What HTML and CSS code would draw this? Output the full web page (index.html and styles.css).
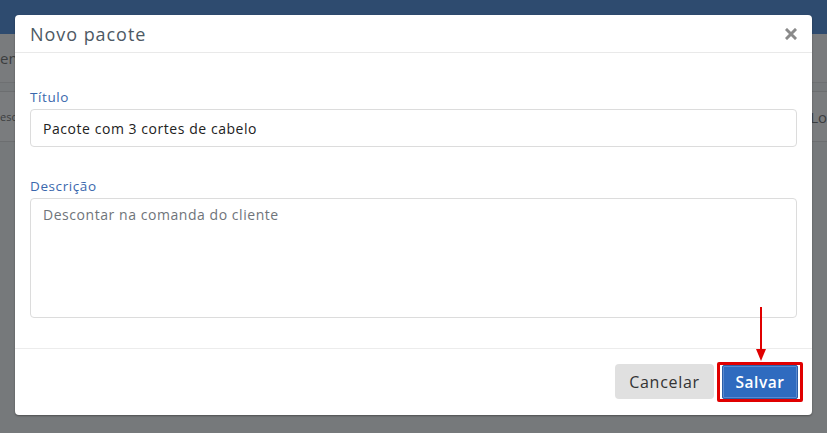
FILE: index.html
```html
<!DOCTYPE html>
<html lang="pt-BR">
<head>
<meta charset="utf-8">
<title>Novo pacote</title>
<link rel="stylesheet" href="styles.css">
</head>
<body>
<div class="page">
  <div class="topbar"></div>
  <div class="subbar"><span class="bg-text">entos</span></div>
  <div class="gap-row"></div>
  <div class="table-row">
    <span class="bg-text small">escrição</span>
    <span class="bg-text right">Lo</span>
  </div>
  <div class="rest"></div>
</div>

<div class="modal">
  <div class="modal-header">
    <h4 class="modal-title">Novo pacote</h4>
    <button class="close" type="button" aria-label="Fechar">
      <svg width="12" height="12" viewBox="0 0 12 12"><path d="M2 2 L10 10 M10 2 L2 10" stroke="#8a8a8a" stroke-width="3" stroke-linecap="square"/></svg>
    </button>
  </div>
  <div class="modal-body">
    <div class="field">
      <label class="label">Título</label>
      <input class="input" type="text" value="Pacote com 3 cortes de cabelo">
    </div>
    <div class="field">
      <label class="label">Descrição</label>
      <textarea class="input textarea" placeholder="Descontar na comanda do cliente"></textarea>
    </div>
  </div>
  <div class="modal-footer">
    <button class="btn btn-cancel" type="button">Cancelar</button>
    <span class="highlight">
      <button class="btn btn-save" type="button">Salvar</button>
    </span>
  </div>
</div>

<svg class="arrow" width="14" height="56" viewBox="0 0 14 56">
  <line x1="7" y1="0" x2="7" y2="44" stroke="#e00000" stroke-width="2"/>
  <path d="M2 42 L12 42 L7 54 Z" fill="#e00000"/>
</svg>
</body>
</html>
```

FILE: styles.css
```css
* { box-sizing: border-box; }
html, body { margin: 0; padding: 0; }
body {
  width: 827px;
  height: 433px;
  overflow: hidden;
  background: #76797b;
  font-family: "Open Sans", "Noto Sans", sans-serif;
  position: relative;
}
.page { display: flex; flex-direction: column; height: 433px; }
.topbar { height: 34px; background: #2e4b6f; }
.subbar {
  height: 49px;
  background: #797b7d;
  border-bottom: 1px solid #6e7072;
  display: flex;
  align-items: center;
}
.gap-row { height: 9px; background: #76797b; border-bottom: 1px solid #6c6e70; }
.table-row {
  height: 50px;
  background: #7a7c7e;
  border-bottom: 1px solid #6c6e70;
  display: flex;
  align-items: center;
  justify-content: space-between;
}
.rest { flex: 1; background: #76797b; }
.bg-text { color: #3c3e40; font-size: 15px; margin-left: 0; }
.bg-text.small { font-size: 11px; }
.bg-text.right { margin-right: 0; font-size: 15px; }

.modal {
  position: absolute;
  left: 15px;
  top: 15px;
  width: 797px;
  height: 400px;
  background: #fff;
  border-radius: 4px;
  box-shadow: 0 1px 2px rgba(0,0,0,0.35);
  display: flex;
  flex-direction: column;
}
.modal-header {
  height: 38px;
  border-bottom: 1px solid #e9e9e9;
  display: flex;
  align-items: center;
  justify-content: space-between;
  padding: 0 15px 0 15px;
}
.modal-title {
  margin: 0;
  font-size: 18px;
  font-weight: 400;
  color: #4d5964;
  letter-spacing: 0.95px;
}
.close {
  border: 0;
  background: none;
  padding: 0;
  display: flex;
  margin-top: 1px;
}
.modal-body {
  flex: 1;
  padding: 34px 15px 0 15px;
  border-bottom: 1px solid #ececec;
}
.field { display: flex; flex-direction: column; margin-bottom: 29px; }
.label {
  font-size: 13.5px;
  line-height: 20px;
  color: #3a68ad;
  margin-bottom: 2px;
  letter-spacing: 0.6px;
}
.input {
  height: 38px;
  border: 1px solid #dcdcdc;
  border-radius: 4px;
  padding: 0 12px;
  font-family: inherit;
  font-size: 14px;
  color: #222;
  letter-spacing: 0.55px;
}
.textarea {
  height: 120px;
  padding: 6px 12px;
  resize: none;
}
.textarea::placeholder { color: #6f747a; opacity: 1; }
.modal-footer {
  height: 66px;
  display: flex;
  justify-content: flex-end;
  align-items: flex-start;
  padding: 15px 15px 0 0;
  gap: 3px;
}
.btn {
  height: 35px;
  border: 0;
  border-radius: 4px;
  font-family: inherit;
  font-size: 16px;
  letter-spacing: 0.7px;
}
.btn-cancel {
  width: 99px;
  background: #e0e0e0;
  color: #333;
}
.highlight {
  margin-top: -2px;
  margin-right: -6px;
  border: 3px solid #e00000;
  padding: 0 2px 0 2px;
  border-radius: 2px;
  display: flex;
  height: 40px;
  align-items: center;
}
.btn-save {
  width: 76px;
  background: #2f6bbf;
  color: #fff;
  border-radius: 2px;
  font-weight: 600;
  font-size: 15.5px;
  letter-spacing: 0.5px;
  height: 34px;
  border: 1px solid #2a5fa8;
  box-shadow: inset 0 0 0 1px #5a8ad0;
}
.arrow {
  position: absolute;
  left: 754px;
  top: 307px;
}
```
